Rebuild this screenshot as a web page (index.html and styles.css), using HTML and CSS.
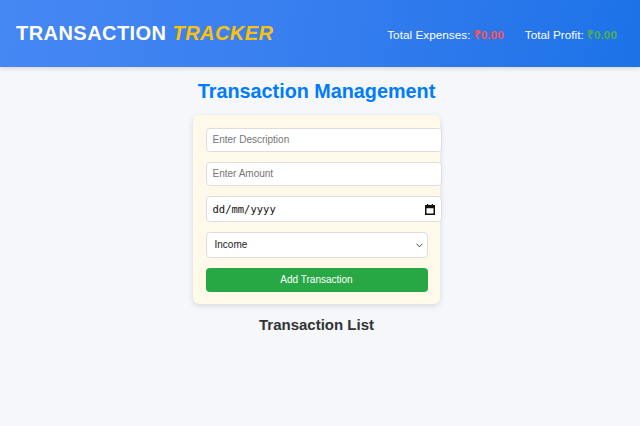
FILE: index.html
```html
<!DOCTYPE html>
<html lang="en">
<head>
<meta charset="utf-8">
<title>Transaction Tracker</title>
<link rel="stylesheet" href="styles.css">
</head>
<body>
<header class="topbar">
  <h1 class="brand">TRANSACTION <span class="brand-accent">TRACKER</span></h1>
  <div class="totals">
    <span class="total">Total Expenses: <b class="neg">₹0.00</b></span>
    <span class="total">Total Profit: <b class="pos">₹0.00</b></span>
  </div>
</header>
<main class="main">
  <h2 class="page-title">Transaction Management</h2>
  <form class="card">
    <input class="field" type="text" placeholder="Enter Description">
    <input class="field" type="text" placeholder="Enter Amount">
    <div class="date-wrap">
      <input class="field date" type="text" placeholder="dd/mm/yyyy">
      <svg class="cal" width="10" height="11" viewBox="0 0 10 11" aria-hidden="true">
        <rect x="0.75" y="1.75" width="8.5" height="8.5" fill="none" stroke="#111" stroke-width="1.5"/>
        <rect x="0.75" y="1.75" width="8.5" height="2.5" fill="#111"/>
        <rect x="2" y="0" width="1.3" height="2" fill="#111"/>
        <rect x="6.7" y="0" width="1.3" height="2" fill="#111"/>
      </svg>
    </div>
    <div class="select-wrap">
      <select class="select">
        <option>Income</option>
        <option>Expense</option>
      </select>
      <svg class="chev" width="7" height="5" viewBox="0 0 7 5" aria-hidden="true">
        <path d="M0.6 0.8 L3.5 3.8 L6.4 0.8" fill="none" stroke="#444" stroke-width="1"/>
      </svg>
    </div>
    <button class="btn" type="button">Add Transaction</button>
  </form>
  <h3 class="list-title">Transaction List</h3>
</main>
</body>
</html>
```
FILE: styles.css
```css
* { margin: 0; }
body {
  margin: 0;
  background: #f5f7fa;
  font-family: "Liberation Sans", Arial, sans-serif;
  color: #333;
}
.topbar {
  height: 67px;
  display: flex;
  align-items: center;
  justify-content: space-between;
  padding: 0 23px 0 16px;
  background: linear-gradient(100deg, #4687f4 0%, #3a80f0 40%, #1d72e8 100%);
  box-shadow: 0 2px 4px rgba(0,0,0,0.12);
}
.brand {
  font-size: 20px;
  font-weight: bold;
  color: #fff;
  letter-spacing: 0.45px;
}
.brand-accent {
  color: #ffc107;
  font-style: italic;
}
.totals {
  display: flex;
  gap: 21px;
  color: #fff;
  font-size: 11.8px;
}
.total b { font-weight: bold; }
.neg { color: #ff5252; }
.pos { color: #4caf50; }
.main {
  display: flex;
  flex-direction: column;
  align-items: center;
  padding-right: 7px;
}
.page-title {
  margin-top: 13px;
  font-size: 19.8px;
  font-weight: bold;
  color: #007bff;
}
.card {
  margin-top: 12px;
  width: 222px;
  padding: 12.5px 12.8px 12px;
  background: #fef9e8;
  border-radius: 6px;
  box-shadow: 0 2px 6px rgba(0,0,0,0.12);
  display: flex;
  flex-direction: column;
  align-items: flex-start;
}
.field {
  display: block;
  width: 100%;
  padding: 5px 6px;
  border: 1px solid #ddd;
  border-radius: 4px;
  background: #fff;
  font-family: "Liberation Sans", Arial, sans-serif;
  font-size: 10px;
  line-height: 12px;
  color: #333;
  margin-bottom: 10px;
}
.field::placeholder { color: #757575; }
.date-wrap {
  position: relative;
  width: 100%;
}
.field.date {
  padding-top: 6px;
  padding-bottom: 6px;
  font-family: "DejaVu Sans Mono", monospace;
  font-size: 10.5px;
}
.field.date::placeholder { color: #111; }
.cal {
  position: absolute;
  left: 219px;
  top: 8px;
}
.select-wrap {
  position: relative;
  width: 100%;
  margin-bottom: 10px;
}
.select {
  display: block;
  width: 100%;
  height: 26px;
  padding: 0 8px;
  border: 1px solid #ddd;
  border-radius: 4px;
  background: #fff;
  font-family: "Liberation Sans", Arial, sans-serif;
  font-size: 10px;
  color: #222;
  appearance: none;
  -webkit-appearance: none;
}
.chev {
  position: absolute;
  right: 5px;
  top: 11px;
  pointer-events: none;
}
.btn {
  width: 100%;
  height: 24px;
  border: 0;
  border-radius: 4px;
  background: #28a745;
  color: #fff;
  font-family: "Liberation Sans", Arial, sans-serif;
  font-size: 10px;
}
.list-title {
  margin-top: 12px;
  font-size: 15px;
  font-weight: bold;
  color: #333;
}
```
